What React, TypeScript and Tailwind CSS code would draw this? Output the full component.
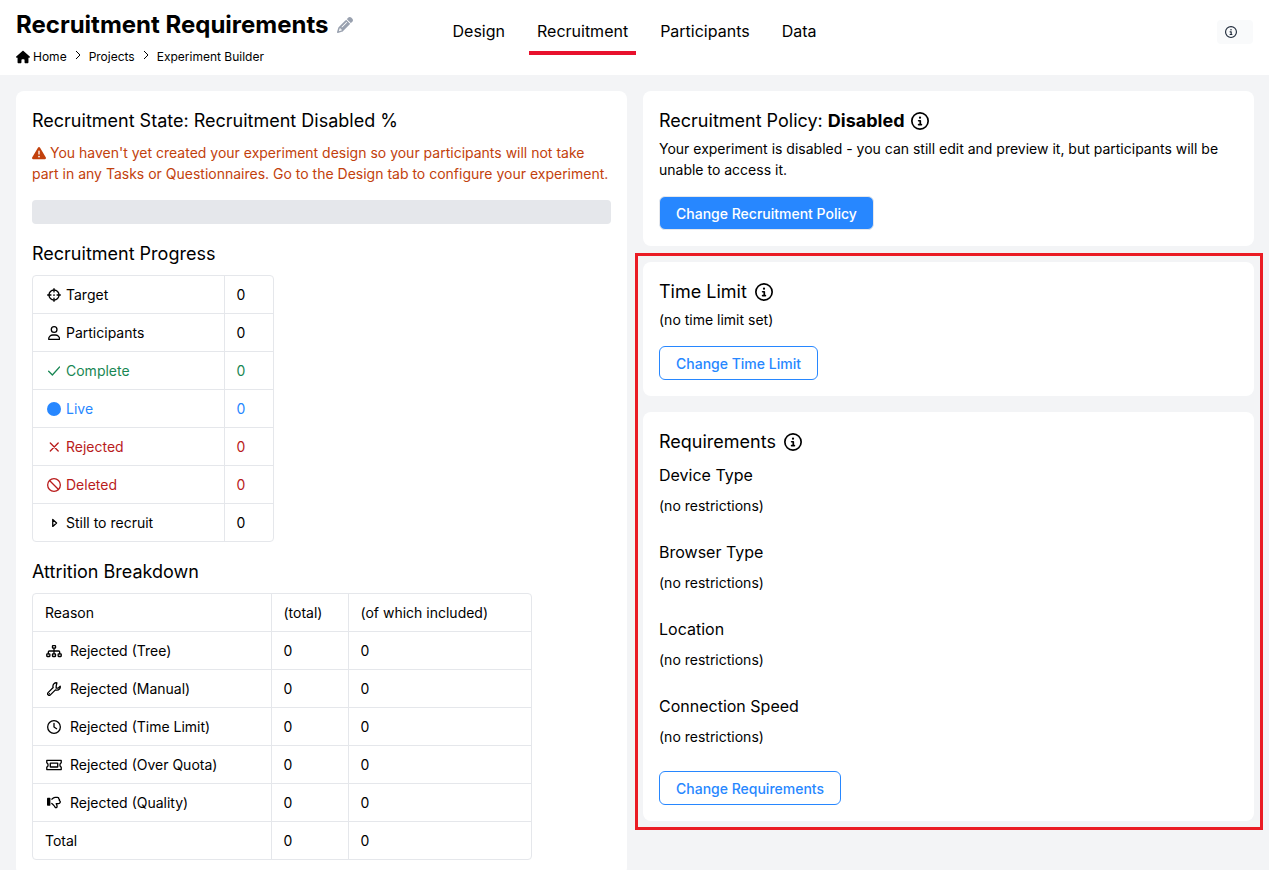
import type { ReactNode } from "react";
import { FaCircle, FaHouse, FaPencil, FaRegClock, FaTriangleExclamation } from "react-icons/fa6";

type IconProps = { className?: string };

const InfoIcon = ({ className = "" }: IconProps) => (
  <svg className={className} viewBox="0 0 512 512" fill="currentColor" aria-hidden="true">
    <path d="M256 48a208 208 0 1 1 0 416 208 208 0 1 1 0-416zm0 464A256 256 0 1 0 256 0a256 256 0 1 0 0 512zM216 336c-13.3 0-24 10.7-24 24s10.7 24 24 24l80 0c13.3 0 24-10.7 24-24s-10.7-24-24-24l-8 0 0-88c0-13.3-10.7-24-24-24l-48 0c-13.3 0-24 10.7-24 24s10.7 24 24 24l24 0 0 64-24 0zm40-144a32 32 0 1 0 0-64 32 32 0 1 0 0 64z" />
  </svg>
);

// shared wrapper for the outlined icons
const Outline = ({ box, className = "h-3.5", children }: { box: string; className?: string; children: ReactNode }) => (
  <svg
    className={className}
    viewBox={box}
    fill="none"
    stroke="currentColor"
    strokeWidth={48}
    strokeLinecap="round"
    strokeLinejoin="round"
    aria-hidden="true"
  >
    {children}
  </svg>
);

const TargetIcon = () => (
  <Outline box="0 0 512 512">
    <circle cx="256" cy="256" r="184" />
    <path d="M256 24v120M256 368v120M24 256h120M368 256h120" />
    <circle cx="256" cy="256" r="32" fill="currentColor" stroke="none" />
  </Outline>
);

const UserIcon = () => (
  <Outline box="0 0 448 512">
    <circle cx="224" cy="128" r="104" />
    <path d="M24 482.3C24 392 97 328 178.3 328h91.4C351 328 424 392 424 482.3c0 3.2-2.5 5.7-5.7 5.7H29.7c-3.2 0-5.7-2.5-5.7-5.7z" />
  </Outline>
);

const CheckIcon = () => (
  <Outline box="0 0 448 512">
    <path d="M424 112L160 400 24 264" />
  </Outline>
);

const CrossIcon = () => (
  <Outline box="0 0 384 512">
    <path d="M48 112l288 288M336 112L48 400" />
  </Outline>
);

const BanIcon = () => (
  <Outline box="0 0 512 512">
    <circle cx="256" cy="256" r="232" />
    <path d="M92 92l328 328" />
  </Outline>
);

const CaretIcon = () => (
  <Outline box="0 0 256 512">
    <path d="M64 130v252l140-126z" />
  </Outline>
);

const TreeIcon = () => (
  <Outline box="0 0 576 512" className="h-3.5 w-4">
    <rect x="232" y="56" width="112" height="96" rx="16" />
    <rect x="24" y="360" width="112" height="96" rx="16" />
    <rect x="232" y="360" width="112" height="96" rx="16" />
    <rect x="440" y="360" width="112" height="96" rx="16" />
    <path d="M288 152v208M80 360v-64c0-22 18-40 40-40h336c22 0 40 18 40 40v64" />
  </Outline>
);

const WrenchIcon = () => (
  <Outline box="0 0 512 512">
    <path d="M362 32C290 14 216 66 216 152c0 18 3 36 9 52L40 389c-22 22-22 57 0 79s61 24 83 2l185-183c16 6 34 9 52 9 88 0 140-74 122-146l-74 74h-72v-72z" />
    <circle cx="88" cy="424" r="24" fill="currentColor" stroke="none" />
  </Outline>
);

const TicketIcon = () => (
  <Outline box="0 0 576 512" className="h-3.5 w-4">
    <path d="M24 88v88c30 12 48 44 48 80s-18 68-48 80v88h528v-88c-30-12-48-44-48-80s18-68 48-80V88z" />
    <rect x="152" y="184" width="272" height="144" rx="12" />
  </Outline>
);

const ThumbDownIcon = () => (
  <Outline box="0 0 512 512">
    <rect x="0" y="64" width="124" height="288" rx="24" fill="currentColor" stroke="none" />
    <path d="M176 116l44-36c24-20 54-32 86-32h76c30 0 52 26 46 54 26 8 36 38 22 62 28 14 44 48 30 72-6 26-26 46-56 46H336c22 34 36 80 30 114-6 36-52 46-74 14l-22-42c-14-30-38-50-62-70l-32-26" />
  </Outline>
);

const ChevronIcon = () => (
  <svg className="h-[18px] w-[6px] pb-1" viewBox="0 0 6 14" fill="none" stroke="currentColor" aria-hidden="true">
    <path d="M1 3l4 4-4 4" />
  </svg>
);

const progress = [
  { label: "Target", icon: <TargetIcon />, color: "" },
  { label: "Participants", icon: <UserIcon />, color: "" },
  { label: "Complete", icon: <CheckIcon />, color: "text-[#198754]" },
  { label: "Live", icon: <FaCircle className="size-3.5" />, color: "text-[#2787ff]" },
  { label: "Rejected", icon: <CrossIcon />, color: "text-[#b91c1c]" },
  { label: "Deleted", icon: <BanIcon />, color: "text-[#b91c1c]" },
  { label: "Still to recruit", icon: <CaretIcon />, color: "" },
];

const attrition = [
  { label: "Rejected (Tree)", icon: <TreeIcon /> },
  { label: "Rejected (Manual)", icon: <WrenchIcon /> },
  { label: "Rejected (Time Limit)", icon: <FaRegClock className="size-3.5" /> },
  { label: "Rejected (Over Quota)", icon: <TicketIcon /> },
  { label: "Rejected (Quality)", icon: <ThumbDownIcon /> },
  { label: "Total", icon: null },
];

const requirements = ["Device Type", "Browser Type", "Location", "Connection Speed"];

const tabs = ["Design", "Recruitment", "Participants", "Data"];

const Card = ({ children }: { children: ReactNode }) => (
  <section className="rounded-lg bg-white p-4">{children}</section>
);

const Heading = ({ children, info, gap = "gap-2" }: { children: ReactNode; info?: string; gap?: string }) => (
  <div className={`flex items-center text-lg leading-normal ${gap}`}>
    <h2>{children}</h2>
    {info && (
      <button type="button" aria-label={info}>
        <InfoIcon className="size-[18px]" />
      </button>
    )}
  </div>
);

const OutlineButton = ({ children }: { children: ReactNode }) => (
  <button
    type="button"
    className="h-[34px] rounded-md border border-[#2787ff] bg-white px-4 font-medium text-[#2787ff]"
  >
    {children}
  </button>
);

const Header = () => (
  <header className="grid grid-cols-[1fr_auto_1fr] bg-white px-4 py-2">
    <div>
      <div className="flex items-center gap-2">
        <h1 className="text-2xl leading-[34px] font-bold">Recruitment Requirements</h1>
        <button type="button" aria-label="Edit title" className="text-gray-400">
          <FaPencil className="size-4" />
        </button>
      </div>
      <nav aria-label="Breadcrumb" className="mt-1.5 mb-px flex items-center gap-2 text-xs leading-[18px]">
        <a href="#home" className="flex items-center gap-[3px]">
          <FaHouse className="size-3.5" />
          Home
        </a>
        <ChevronIcon />
        <a href="#projects">Projects</a>
        <ChevronIcon />
        <a href="#builder">Experiment Builder</a>
      </nav>
    </div>
    <nav aria-label="Sections" className="flex items-start gap-4 text-base">
      {tabs.map((tab) => (
        <a
          key={tab}
          href={`#${tab.toLowerCase()}`}
          className={`border-b-4 px-2 pt-[11px] pb-2 leading-6 ${
            tab === "Recruitment" ? "border-[#e8112d]" : "border-transparent"
          }`}
        >
          {tab}
        </a>
      ))}
    </nav>
    <div className="flex items-start justify-end pt-3">
      <button type="button" aria-label="Help" className="rounded bg-gray-50 py-1.5 pr-4 pl-2 text-gray-800">
        <InfoIcon className="size-3" />
      </button>
    </div>
  </header>
);

const ProgressTable = () => (
  <div className="mt-2 w-[242px] overflow-hidden rounded border border-gray-200">
    <table className="w-full">
      <tbody>
        {progress.map(({ label, icon, color }) => (
          <tr key={label} className={`border-b border-gray-200 last:border-b-0 ${color}`}>
            <th scope="row" className="border-r border-gray-200 px-3 py-2 text-left font-normal">
              <span className="flex items-center gap-[3px]">
                <span className="flex w-[18px] justify-center">{icon}</span>
                {label}
              </span>
            </th>
            <td className="w-[49px] px-3 py-2">0</td>
          </tr>
        ))}
      </tbody>
    </table>
  </div>
);

const AttritionTable = () => (
  <div className="mt-2 w-[500px] overflow-hidden rounded border border-gray-200">
    <table className="w-full table-fixed">
      <thead>
        <tr className="border-b border-gray-200 text-left">
          <th scope="col" className="w-[238px] border-r border-gray-200 px-3 py-2 font-normal">Reason</th>
          <th scope="col" className="w-[77px] border-r border-gray-200 px-3 py-2 font-normal">(total)</th>
          <th scope="col" className="px-3 py-2 font-normal">(of which included)</th>
        </tr>
      </thead>
      <tbody>
        {attrition.map(({ label, icon }) => (
          <tr key={label} className="border-b border-gray-200 last:border-b-0">
            <th scope="row" className="border-r border-gray-200 px-3 py-2 text-left font-normal">
              <span className="flex items-center gap-[7px]">
                {icon && <span className="flex w-[18px] justify-center">{icon}</span>}
                {label}
              </span>
            </th>
            <td className="border-r border-gray-200 px-3 py-2">0</td>
            <td className="px-3 py-2">0</td>
          </tr>
        ))}
      </tbody>
    </table>
  </div>
);

export default function App() {
  return (
    <div className="min-h-screen bg-gray-100 font-[Inter,sans-serif] text-sm leading-[21px] text-black">
      <Header />
      <main className="grid grid-cols-2 gap-4 py-4 pr-[15px] pl-4">
        <Card>
          <Heading>Recruitment State: Recruitment Disabled %</Heading>
          <p className="mt-2 text-[#c2410c]">
            <FaTriangleExclamation className="mr-1 inline size-3.5 align-[-2px]" />
            You haven't yet created your experiment design so your participants will not take part in any Tasks or
            Questionnaires. Go to the Design tab to configure your experiment.
          </p>
          <div className="my-4 h-6 rounded bg-gray-200" role="progressbar" aria-label="Recruitment" aria-valuenow={0} />
          <Heading>Recruitment Progress</Heading>
          <ProgressTable />
          <div className="mt-4">
            <Heading>Attrition Breakdown</Heading>
          </div>
          <AttritionTable />
        </Card>

        <div className="flex flex-col gap-4">
          <Card>
            <Heading info="About recruitment policy" gap="gap-1.5">
              Recruitment Policy: <strong className="font-bold">Disabled</strong>
            </Heading>
            <p className="mt-1 mb-4">
              Your experiment is disabled - you can still edit and preview it, but participants will be unable to access
              it.
            </p>
            <button
              type="button"
              className="h-[34px] rounded-md border border-gray-200 bg-[#2787ff] px-4 font-medium text-white"
            >
              Change Recruitment Policy
            </button>
          </Card>

          <div className="relative flex flex-col gap-4">
            <div className="pointer-events-none absolute -inset-y-[9px] -right-[9px] -left-2 border-3 border-[#ea1c24]" />
            <Card>
              <Heading info="About time limit">Time Limit</Heading>
              <p className="mt-1 mb-4">(no time limit set)</p>
              <OutlineButton>Change Time Limit</OutlineButton>
            </Card>
            <Card>
              <Heading info="About requirements">Requirements</Heading>
              {requirements.map((name) => (
                <div key={name} className="mt-2 mb-6">
                  <h3 className="text-base leading-6">{name}</h3>
                  <p className="mt-2">(no restrictions)</p>
                </div>
              ))}
              <OutlineButton>Change Requirements</OutlineButton>
            </Card>
          </div>
        </div>
      </main>
    </div>
  );
}
